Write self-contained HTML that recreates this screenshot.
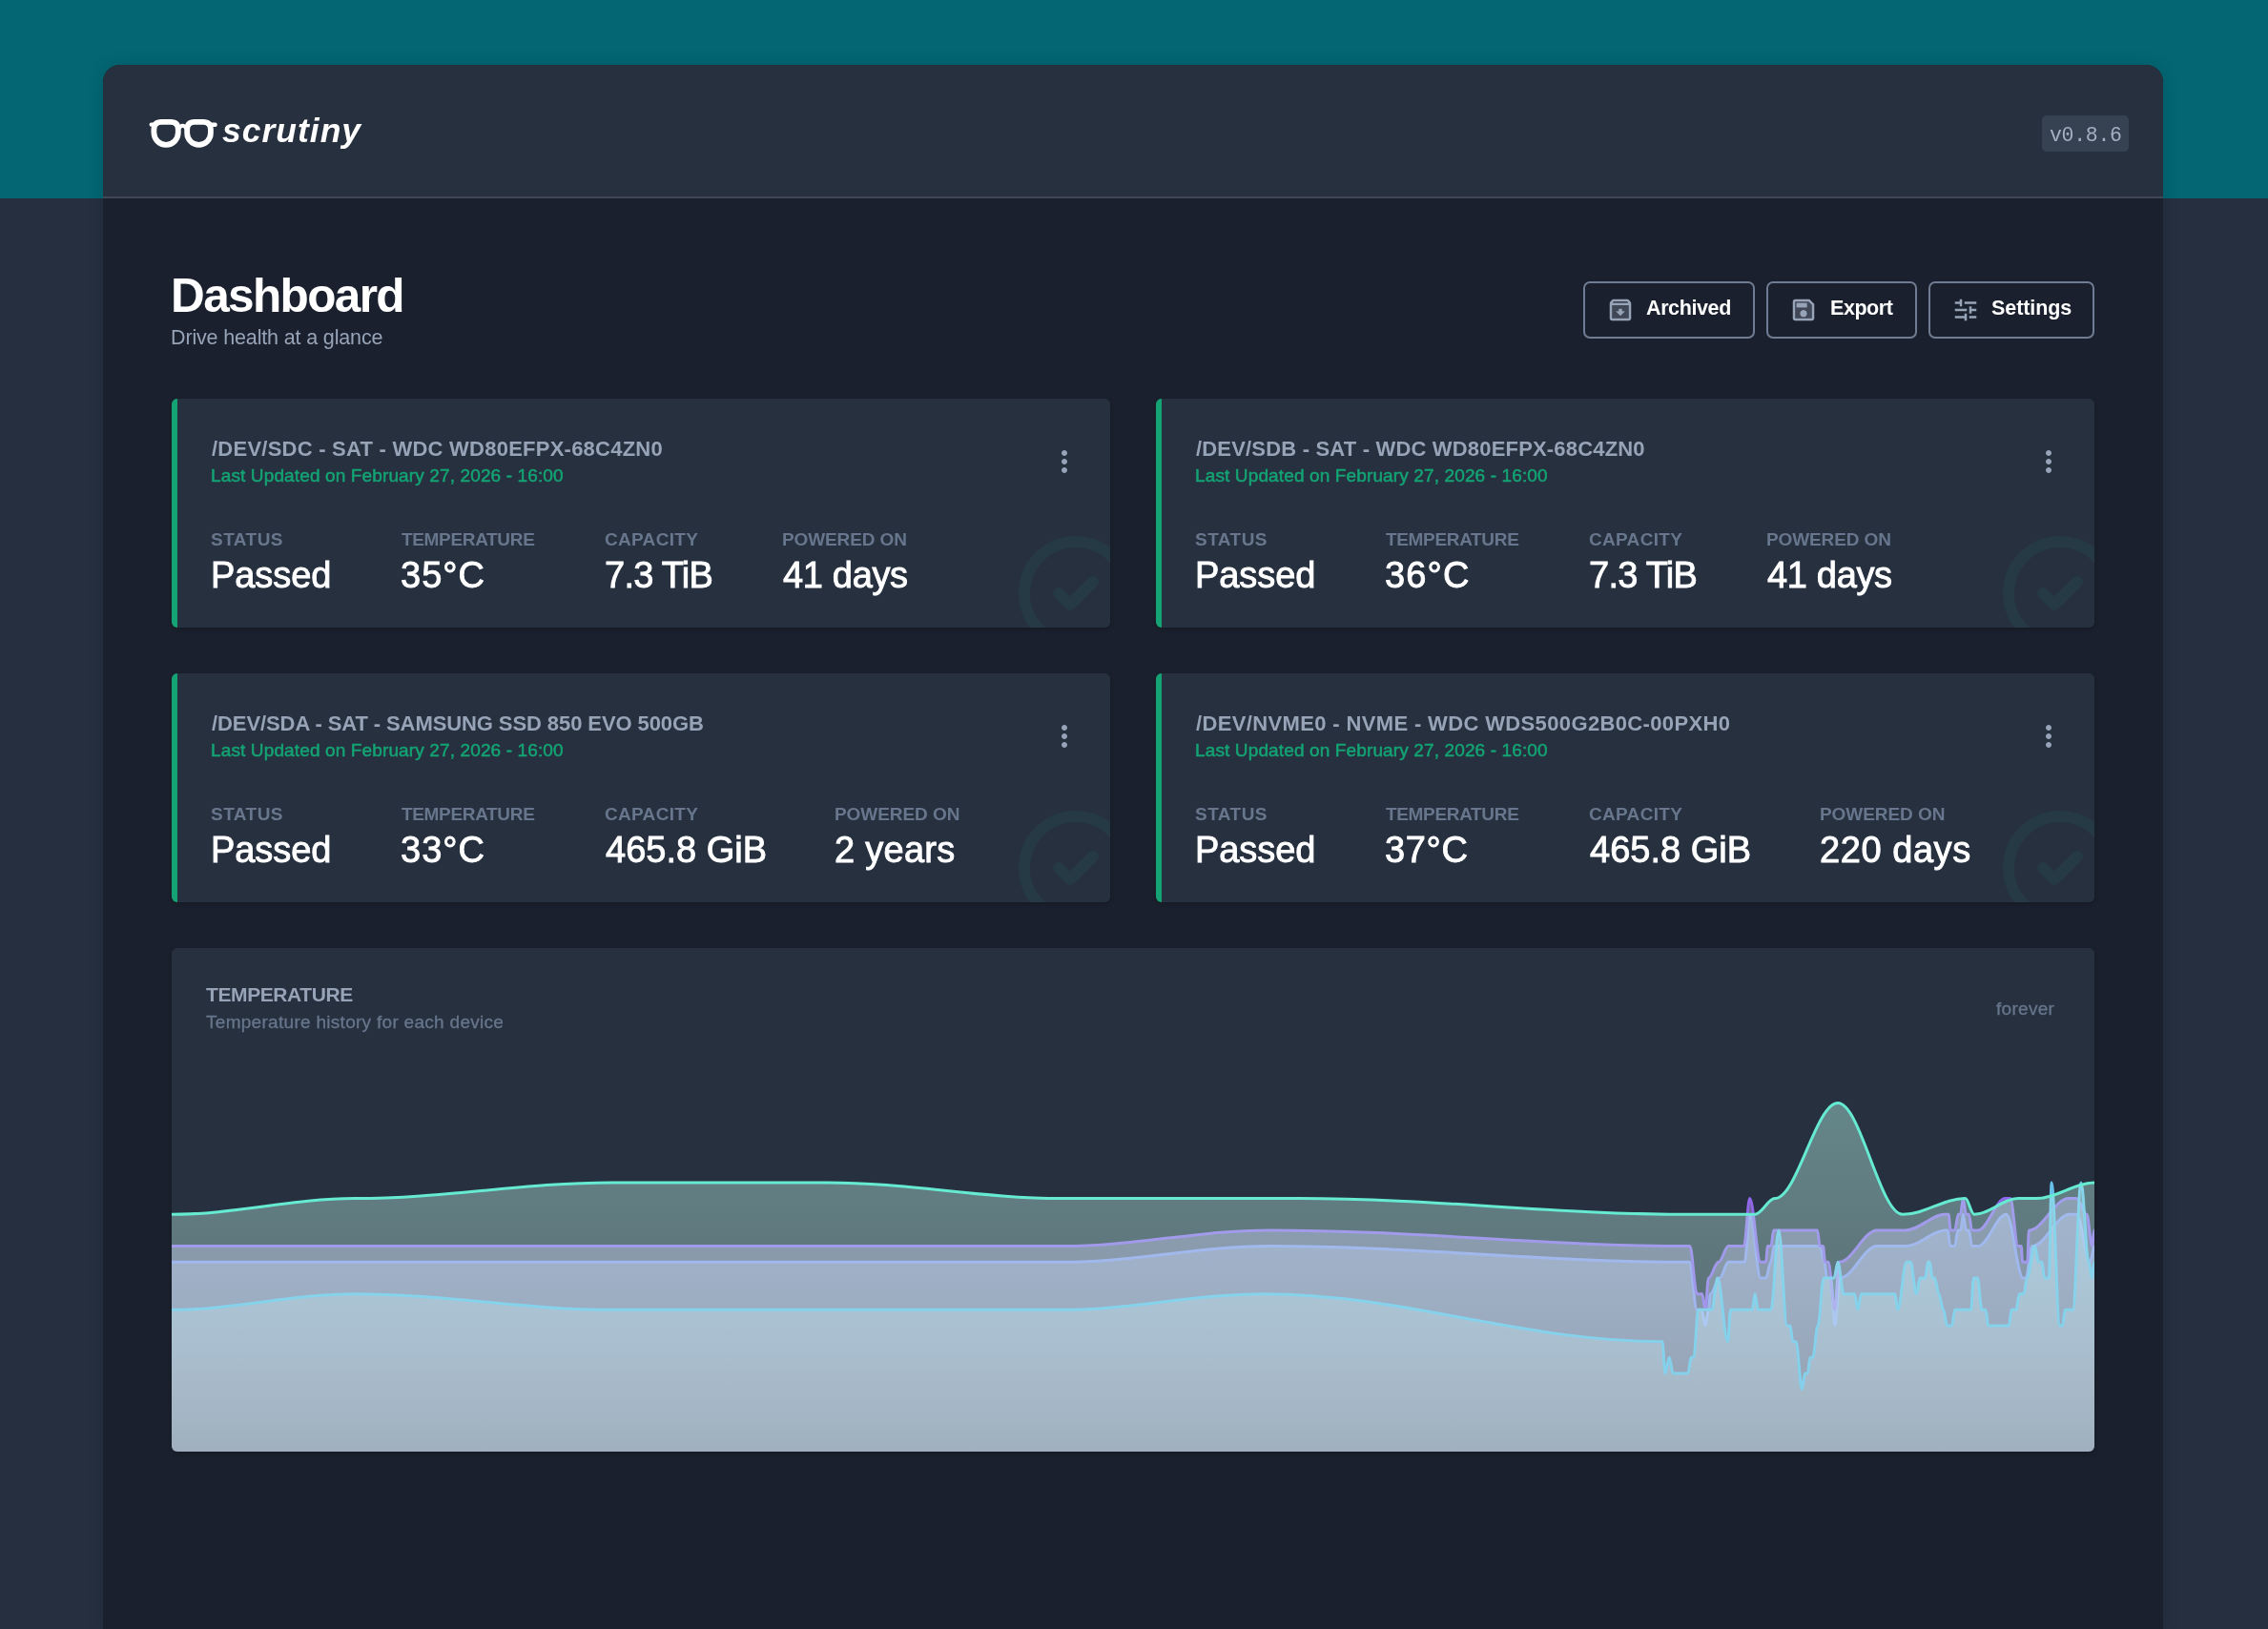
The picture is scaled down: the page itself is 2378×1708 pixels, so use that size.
<!DOCTYPE html>
<html><head><meta charset="utf-8"><title>scrutiny</title>
<style>
html,body{margin:0;padding:0}
body{width:2378px;height:1708px;overflow:hidden;background:#252f3f;position:relative;font-family:"Liberation Sans",sans-serif}
.band{position:absolute;left:0;top:0;width:2378px;height:208px;background:#036672}
.wrap{position:absolute;left:108px;top:68px;width:2160px;height:1640px;background:#1b202e;border-radius:18px 18px 0 0;box-shadow:0 0 18px rgba(0,0,0,.12);overflow:hidden}
.hdr{position:absolute;left:0;top:0;width:2160px;height:138px;background:#27303f;border-bottom:2px solid #414757}
.t{position:absolute;white-space:nowrap;line-height:1;will-change:transform}
.card{position:absolute;width:984px;height:240px;background:#27303f;border-radius:6px;overflow:hidden;box-shadow:0 2px 5px rgba(0,0,0,.18)}
.card:before{content:"";position:absolute;left:0;top:0;width:6px;height:100%;background:#14a474}
.btn{position:absolute;top:295px;height:56px;border:2px solid #707c92;border-radius:7px}
.badge{position:absolute;left:2141px;top:121px;width:91px;height:38px;border-radius:5px;background:#364152}
.chartcard{position:absolute;left:180px;top:994px;width:2016px;height:528px;background:#27303f;border-radius:6px;overflow:hidden;box-shadow:0 2px 5px rgba(0,0,0,.18)}
svg{position:absolute;overflow:visible}
</style></head><body>
<div class="band"></div>
<div class="wrap"><div class="hdr"></div></div>
<div class="badge"></div>

<svg style="left:150px;top:115px" width="90" height="50" viewBox="0 0 90 50">
<g fill="none" stroke="#fff" stroke-linecap="round" stroke-linejoin="round">
<path stroke-width="5.800" d="M11.400 20.800Q11.400 12.800 19.400 12.800H28.800Q36.800 12.800 36.800 20.800V24.100A12.700 12.700 0 0 1 11.400 24.100Z"/>
<path stroke-width="5.800" d="M46.200 20.800Q46.200 12.800 54.200 12.800H62.900Q70.900 12.800 70.900 20.800V24.450A12.350 12.350 0 0 1 46.200 24.450Z"/>
<path stroke-width="4.200" d="M37.500 19.500Q41.500 14 45.500 19.500"/>
<path stroke-width="4.400" d="M8.700 15.600H13M70 15.800H75.600"/>
</g></svg>

<div class="btn" style="left:1660px;width:176px"></div>
<div class="btn" style="left:1852px;width:154px"></div>
<div class="btn" style="left:2022px;width:170px"></div>
<svg style="left:1684px;top:310px" width="30" height="30" viewBox="0 0 24 24">
<path d="M5 19h14V8H5v11zm5.55-6v-2h2.91v2H16l-4 4-4-4h2.55z" fill="#97a3b7" opacity=".3"/>
<path d="M16 13h-2.55v-2h-2.9v2H8l4 4zm4.54-7.77l-1.39-1.68C18.88 3.21 18.47 3 18 3H6c-.47 0-.88.21-1.16.55L3.46 5.23C3.17 5.57 3 6.02 3 6.5V19c0 1.1.9 2 2 2h14c1.1 0 2-.9 2-2V6.500c0-.48-.17-.93-.46-1.27zM6.240 5h11.520l.81.970H5.440l.8-.97zM19 19H5V8h14v11z" fill="#97a3b7"/>
</svg>
<svg style="left:1876px;top:310px" width="30" height="30" viewBox="0 0 24 24">
<path d="M5 5v14h14V7.830L16.170 5H5zm7 13c-1.660 0-3-1.340-3-3s1.340-3 3-3 3 1.340 3 3-1.340 3-3 3zm3-8H6V6h9v4z" fill="#97a3b7" opacity=".3"/>
<path d="M17 3H5c-1.110 0-2 .9-2 2v14c0 1.100.890 2 2 2h14c1.100 0 2-.9 2-2V7l-4-4zm2 16H5V5h11.170L19 7.830V19zm-7-7c-1.660 0-3 1.340-3 3s1.340 3 3 3 3-1.340 3-3-1.340-3-3-3zM6 6h9v4H6z" fill="#97a3b7"/>
</svg>
<svg style="left:2046px;top:310px" width="30" height="30" viewBox="0 0 24 24">
<path transform="translate(24 0) scale(-1 1)" d="M3 17v2h6v-2H3zM3 5v2h10V5H3zm10 16v-2h8v-2h-8v-2h-2v6h2zM7 9v2H3v2h4v2h2V9H7zm14 4v-2H11v2h10zm-6-4h2V7h4V5h-4V3h-2v6z" fill="#97a3b7"/>
</svg>

<div class="card" style="left:180px;top:418px">
<svg style="left:876px;top:131.500px" width="144" height="144" viewBox="0 0 24 24"><path d="M9 12l2 2 4-4m6 2a9 9 0 11-18 0 9 9 0 0118 0z" fill="none" stroke="#14a474" stroke-opacity=".095" stroke-width="2" stroke-linecap="round" stroke-linejoin="round"/></svg>
<svg style="left:917.800px;top:48px" width="36" height="36" viewBox="0 0 24 24"><path d="M12 8c1.100 0 2-.9 2-2s-.9-2-2-2-2 .9-2 2 .9 2 2 2zm0 2c-1.100 0-2 .9-2 2s.9 2 2 2 2-.9 2-2-.9-2-2-2zm0 6c-1.100 0-2 .9-2 2s.9 2 2 2 2-.9 2-2-.9-2-2-2z" fill="#97a3b7"/></svg>
</div>
<div class="card" style="left:1212px;top:418px">
<svg style="left:876px;top:131.500px" width="144" height="144" viewBox="0 0 24 24"><path d="M9 12l2 2 4-4m6 2a9 9 0 11-18 0 9 9 0 0118 0z" fill="none" stroke="#14a474" stroke-opacity=".095" stroke-width="2" stroke-linecap="round" stroke-linejoin="round"/></svg>
<svg style="left:917.800px;top:48px" width="36" height="36" viewBox="0 0 24 24"><path d="M12 8c1.100 0 2-.9 2-2s-.9-2-2-2-2 .9-2 2 .9 2 2 2zm0 2c-1.100 0-2 .9-2 2s.9 2 2 2 2-.9 2-2-.9-2-2-2zm0 6c-1.100 0-2 .9-2 2s.9 2 2 2 2-.9 2-2-.9-2-2-2z" fill="#97a3b7"/></svg>
</div>
<div class="card" style="left:180px;top:706px">
<svg style="left:876px;top:131.500px" width="144" height="144" viewBox="0 0 24 24"><path d="M9 12l2 2 4-4m6 2a9 9 0 11-18 0 9 9 0 0118 0z" fill="none" stroke="#14a474" stroke-opacity=".095" stroke-width="2" stroke-linecap="round" stroke-linejoin="round"/></svg>
<svg style="left:917.800px;top:48px" width="36" height="36" viewBox="0 0 24 24"><path d="M12 8c1.100 0 2-.9 2-2s-.9-2-2-2-2 .9-2 2 .9 2 2 2zm0 2c-1.100 0-2 .9-2 2s.9 2 2 2 2-.9 2-2-.9-2-2-2zm0 6c-1.100 0-2 .9-2 2s.9 2 2 2 2-.9 2-2-.9-2-2-2z" fill="#97a3b7"/></svg>
</div>
<div class="card" style="left:1212px;top:706px">
<svg style="left:876px;top:131.500px" width="144" height="144" viewBox="0 0 24 24"><path d="M9 12l2 2 4-4m6 2a9 9 0 11-18 0 9 9 0 0118 0z" fill="none" stroke="#14a474" stroke-opacity=".095" stroke-width="2" stroke-linecap="round" stroke-linejoin="round"/></svg>
<svg style="left:917.800px;top:48px" width="36" height="36" viewBox="0 0 24 24"><path d="M12 8c1.100 0 2-.9 2-2s-.9-2-2-2-2 .9-2 2 .9 2 2 2zm0 2c-1.100 0-2 .9-2 2s.9 2 2 2 2-.9 2-2-.9-2-2-2zm0 6c-1.100 0-2 .9-2 2s.9 2 2 2 2-.9 2-2-.9-2-2-2z" fill="#97a3b7"/></svg>
</div>
<div class="chartcard"><svg style="left:0;top:0" width="2016" height="528" viewBox="180 994 2016 528"><defs>
<linearGradient id="gb" x1="0" y1="0" x2="0" y2="1"><stop offset="0" stop-color="#b2bef4" stop-opacity="0.44"/><stop offset="1" stop-color="#d5dbf9" stop-opacity="0.25"/></linearGradient>
<linearGradient id="gp" x1="0" y1="0" x2="0" y2="1"><stop offset="0" stop-color="#c7b2f4" stop-opacity="0.44"/><stop offset="1" stop-color="#e0d5f9" stop-opacity="0.25"/></linearGradient>
<linearGradient id="gc" x1="0" y1="0" x2="0" y2="1"><stop offset="0" stop-color="#b2dff4" stop-opacity="0.44"/><stop offset="1" stop-color="#d5edf9" stop-opacity="0.25"/></linearGradient>
<linearGradient id="gg" x1="0" y1="0" x2="0" y2="1"><stop offset="0" stop-color="#b2f4e8" stop-opacity="0.44"/><stop offset="1" stop-color="#d5f9f2" stop-opacity="0.25"/></linearGradient>
</defs>
<path d="M180.0 1323.3L1114.0 1323.3C1190.0 1323.3 1255.0 1306.6 1331.0 1306.6C1485.1 1306.6 1617.1 1323.3 1771.2 1323.3C1774.0 1323.3 1776.5 1373.3 1779.3 1373.3L1784.0 1373.3C1785.4 1373.3 1786.6 1390.0 1788.0 1390.0C1789.2 1390.0 1790.2 1373.3 1791.4 1373.3C1792.1 1373.3 1792.7 1356.7 1793.4 1356.7C1796.8 1356.7 1799.6 1340.0 1803.0 1340.0C1806.3 1340.0 1809.0 1323.3 1812.3 1323.3L1829.2 1323.3C1831.2 1323.3 1833.0 1273.3 1835.0 1273.3C1838.8 1273.3 1842.2 1340.0 1846.0 1340.0L1851.5 1340.0C1853.3 1340.0 1854.9 1323.3 1856.7 1323.3C1857.9 1323.3 1859.0 1306.6 1860.2 1306.6L1908.2 1306.6C1909.8 1306.6 1911.3 1323.3 1912.9 1323.3C1913.8 1323.3 1914.7 1340.0 1915.6 1340.0L1919.6 1340.0C1921.1 1340.0 1922.5 1390.0 1924.0 1390.0C1925.8 1390.0 1927.2 1340.0 1929.0 1340.0C1942.7 1340.0 1954.3 1306.6 1968.0 1306.6L1999.0 1306.6C2013.2 1306.6 2025.4 1290.0 2039.6 1290.0L2042.2 1290.0C2043.1 1290.0 2043.9 1306.6 2044.8 1306.6L2049.6 1306.6C2050.8 1306.6 2051.7 1290.0 2052.9 1290.0L2055.8 1290.0C2056.7 1290.0 2057.5 1273.3 2058.4 1273.3C2059.5 1273.3 2060.3 1290.0 2061.4 1290.0L2064.3 1290.0C2065.5 1290.0 2066.4 1306.6 2067.6 1306.6L2074.0 1306.6C2084.4 1306.6 2093.3 1273.3 2103.7 1273.3C2109.9 1273.3 2115.1 1340.0 2121.3 1340.0L2124.0 1340.0C2126.3 1340.0 2128.4 1306.6 2130.7 1306.6C2144.4 1306.6 2156.2 1273.3 2169.9 1273.3L2177.3 1273.3C2182.3 1273.3 2186.5 1323.3 2191.5 1323.3C2193.1 1323.3 2194.4 1306.6 2196.0 1306.6L2196 1522L180 1522Z" fill="url(#gb)"/>
<path d="M180.0 1323.3L1114.0 1323.3C1190.0 1323.3 1255.0 1306.6 1331.0 1306.6C1485.1 1306.6 1617.1 1323.3 1771.2 1323.3C1774.0 1323.3 1776.5 1373.3 1779.3 1373.3L1784.0 1373.3C1785.4 1373.3 1786.6 1390.0 1788.0 1390.0C1789.2 1390.0 1790.2 1373.3 1791.4 1373.3C1792.1 1373.3 1792.7 1356.7 1793.4 1356.7C1796.8 1356.7 1799.6 1340.0 1803.0 1340.0C1806.3 1340.0 1809.0 1323.3 1812.3 1323.3L1829.2 1323.3C1831.2 1323.3 1833.0 1273.3 1835.0 1273.3C1838.8 1273.3 1842.2 1340.0 1846.0 1340.0L1851.5 1340.0C1853.3 1340.0 1854.9 1323.3 1856.7 1323.3C1857.9 1323.3 1859.0 1306.6 1860.2 1306.6L1908.2 1306.6C1909.8 1306.6 1911.3 1323.3 1912.9 1323.3C1913.8 1323.3 1914.7 1340.0 1915.6 1340.0L1919.6 1340.0C1921.1 1340.0 1922.5 1390.0 1924.0 1390.0C1925.8 1390.0 1927.2 1340.0 1929.0 1340.0C1942.7 1340.0 1954.3 1306.6 1968.0 1306.6L1999.0 1306.6C2013.2 1306.6 2025.4 1290.0 2039.6 1290.0L2042.2 1290.0C2043.1 1290.0 2043.9 1306.6 2044.8 1306.6L2049.6 1306.6C2050.8 1306.6 2051.7 1290.0 2052.9 1290.0L2055.8 1290.0C2056.7 1290.0 2057.5 1273.3 2058.4 1273.3C2059.5 1273.3 2060.3 1290.0 2061.4 1290.0L2064.3 1290.0C2065.5 1290.0 2066.4 1306.6 2067.6 1306.6L2074.0 1306.6C2084.4 1306.6 2093.3 1273.3 2103.7 1273.3C2109.9 1273.3 2115.1 1340.0 2121.3 1340.0L2124.0 1340.0C2126.3 1340.0 2128.4 1306.6 2130.7 1306.6C2144.4 1306.6 2156.2 1273.3 2169.9 1273.3L2177.3 1273.3C2182.3 1273.3 2186.5 1323.3 2191.5 1323.3C2193.1 1323.3 2194.4 1306.6 2196.0 1306.6" fill="none" stroke="#667eea" stroke-width="3" stroke-linecap="butt"/>
<path d="M180.0 1306.6L1114.0 1306.6C1190.0 1306.6 1255.0 1290.0 1331.0 1290.0C1485.3 1290.0 1617.5 1306.6 1771.8 1306.6C1774.4 1306.6 1776.7 1356.7 1779.3 1356.7L1784.7 1356.7C1785.9 1356.7 1786.8 1373.3 1788.0 1373.3C1789.2 1373.3 1790.2 1340.0 1791.4 1340.0C1795.1 1340.0 1798.2 1323.3 1801.9 1323.3C1805.5 1323.3 1808.7 1306.6 1812.3 1306.6L1828.5 1306.6C1830.6 1306.6 1832.5 1256.6 1834.6 1256.6C1838.6 1256.6 1842.0 1323.3 1846.0 1323.3L1851.5 1323.3C1852.2 1323.3 1852.8 1306.6 1853.5 1306.6L1856.9 1306.6C1857.8 1306.6 1858.7 1290.0 1859.6 1290.0L1905.5 1290.0C1906.4 1290.0 1907.3 1306.6 1908.2 1306.6L1911.5 1306.6C1912.2 1306.6 1912.9 1323.3 1913.6 1323.3L1917.0 1323.3C1919.3 1323.3 1921.4 1373.3 1923.7 1373.3C1925.3 1373.3 1926.8 1323.3 1928.4 1323.3C1942.3 1323.3 1954.1 1290.0 1968.0 1290.0L1998.0 1290.0C2012.6 1290.0 2025.0 1273.3 2039.6 1273.3L2043.0 1273.3C2043.8 1273.3 2044.4 1290.0 2045.2 1290.0L2049.6 1290.0C2050.9 1290.0 2052.0 1273.3 2053.3 1273.3L2055.5 1273.3C2056.5 1273.3 2057.4 1256.6 2058.4 1256.6C2059.5 1256.6 2060.3 1273.3 2061.4 1273.3L2064.3 1273.3C2065.5 1273.3 2066.4 1290.0 2067.6 1290.0L2074.0 1290.0C2084.0 1290.0 2092.6 1256.6 2102.6 1256.6L2107.8 1256.6C2110.6 1256.6 2113.1 1306.6 2115.9 1306.6L2119.2 1306.6C2119.7 1306.6 2120.1 1323.3 2120.6 1323.3L2125.8 1323.3C2126.3 1323.3 2126.8 1290.0 2127.3 1290.0C2141.9 1290.0 2154.3 1256.6 2168.9 1256.6L2177.0 1256.6C2180.8 1256.6 2184.2 1273.3 2188.0 1273.3C2189.9 1273.3 2191.6 1306.6 2193.5 1306.6C2194.4 1306.6 2195.1 1290.0 2196.0 1290.0L2196 1522L180 1522Z" fill="url(#gp)"/>
<path d="M180.0 1306.6L1114.0 1306.6C1190.0 1306.6 1255.0 1290.0 1331.0 1290.0C1485.3 1290.0 1617.5 1306.6 1771.8 1306.6C1774.4 1306.6 1776.7 1356.7 1779.3 1356.7L1784.7 1356.7C1785.9 1356.7 1786.8 1373.3 1788.0 1373.3C1789.2 1373.3 1790.2 1340.0 1791.4 1340.0C1795.1 1340.0 1798.2 1323.3 1801.9 1323.3C1805.5 1323.3 1808.7 1306.6 1812.3 1306.6L1828.5 1306.6C1830.6 1306.6 1832.5 1256.6 1834.6 1256.6C1838.6 1256.6 1842.0 1323.3 1846.0 1323.3L1851.5 1323.3C1852.2 1323.3 1852.8 1306.6 1853.5 1306.6L1856.9 1306.6C1857.8 1306.6 1858.7 1290.0 1859.6 1290.0L1905.5 1290.0C1906.4 1290.0 1907.3 1306.6 1908.2 1306.6L1911.5 1306.6C1912.2 1306.6 1912.9 1323.3 1913.6 1323.3L1917.0 1323.3C1919.3 1323.3 1921.4 1373.3 1923.7 1373.3C1925.3 1373.3 1926.8 1323.3 1928.4 1323.3C1942.3 1323.3 1954.1 1290.0 1968.0 1290.0L1998.0 1290.0C2012.6 1290.0 2025.0 1273.3 2039.6 1273.3L2043.0 1273.3C2043.8 1273.3 2044.4 1290.0 2045.2 1290.0L2049.6 1290.0C2050.9 1290.0 2052.0 1273.3 2053.3 1273.3L2055.5 1273.3C2056.5 1273.3 2057.4 1256.6 2058.4 1256.6C2059.5 1256.6 2060.3 1273.3 2061.4 1273.3L2064.3 1273.3C2065.5 1273.3 2066.4 1290.0 2067.6 1290.0L2074.0 1290.0C2084.0 1290.0 2092.6 1256.6 2102.6 1256.6L2107.8 1256.6C2110.6 1256.6 2113.1 1306.6 2115.9 1306.6L2119.2 1306.6C2119.7 1306.6 2120.1 1323.3 2120.6 1323.3L2125.8 1323.3C2126.3 1323.3 2126.8 1290.0 2127.3 1290.0C2141.9 1290.0 2154.3 1256.6 2168.9 1256.6L2177.0 1256.6C2180.8 1256.6 2184.2 1273.3 2188.0 1273.3C2189.9 1273.3 2191.6 1306.6 2193.5 1306.6C2194.4 1306.6 2195.1 1290.0 2196.0 1290.0" fill="none" stroke="#9066ea" stroke-width="3" stroke-linecap="butt"/>
<path d="M180.0 1373.3C247.2 1373.3 304.8 1356.7 372.0 1356.7C466.5 1356.7 547.5 1373.3 642.0 1373.3L1114.0 1373.3C1187.8 1373.3 1251.2 1356.7 1325.0 1356.7C1471.3 1356.7 1596.7 1406.7 1743.0 1406.7C1744.0 1406.7 1745.0 1440.0 1746.0 1440.0C1747.5 1440.0 1748.7 1423.3 1750.2 1423.3C1751.6 1423.3 1752.9 1440.0 1754.3 1440.0L1769.8 1440.0C1771.0 1440.0 1772.0 1423.3 1773.2 1423.3L1775.9 1423.3C1777.5 1423.3 1779.0 1373.3 1780.6 1373.3L1794.8 1373.3C1796.9 1373.3 1798.8 1340.0 1800.9 1340.0C1804.7 1340.0 1807.9 1406.7 1811.7 1406.7C1812.6 1406.7 1813.5 1373.3 1814.4 1373.3L1837.3 1373.3C1838.2 1373.3 1839.1 1356.7 1840.0 1356.7C1841.2 1356.7 1842.2 1373.3 1843.4 1373.3L1856.9 1373.3C1859.7 1373.3 1862.2 1290.0 1865.0 1290.0C1868.0 1290.0 1870.7 1390.0 1873.7 1390.0L1877.0 1390.0C1878.0 1390.0 1878.8 1406.7 1879.8 1406.7L1883.2 1406.7C1885.3 1406.7 1887.2 1456.7 1889.3 1456.7C1890.5 1456.7 1891.4 1440.0 1892.6 1440.0L1895.3 1440.0C1896.2 1440.0 1897.1 1423.3 1898.0 1423.3L1900.7 1423.3C1902.6 1423.3 1904.1 1390.0 1906.0 1390.0C1908.2 1390.0 1910.0 1340.0 1912.2 1340.0L1923.0 1340.0C1924.4 1340.0 1925.6 1323.3 1927.0 1323.3C1929.1 1323.3 1931.0 1356.7 1933.1 1356.7L1944.6 1356.7C1945.8 1356.7 1946.8 1373.3 1948.0 1373.3C1949.2 1373.3 1950.2 1356.7 1951.4 1356.7L1987.0 1356.7C1987.9 1356.7 1988.8 1373.3 1989.7 1373.3C1993.0 1373.3 1995.7 1323.3 1999.0 1323.3L2003.2 1323.3C2005.3 1323.3 2007.2 1356.7 2009.3 1356.7C2010.7 1356.7 2011.9 1340.0 2013.3 1340.0L2018.7 1340.0C2019.6 1340.0 2020.5 1323.3 2021.4 1323.3L2023.4 1323.3C2024.3 1323.3 2025.2 1340.0 2026.1 1340.0L2028.5 1340.0C2030.0 1340.0 2031.4 1356.7 2032.9 1356.7C2034.5 1356.7 2036.0 1373.3 2037.6 1373.3C2039.0 1373.3 2040.3 1390.0 2041.7 1390.0L2046.4 1390.0C2047.6 1390.0 2048.6 1373.3 2049.8 1373.3L2066.6 1373.3C2067.5 1373.3 2068.4 1340.0 2069.3 1340.0L2073.4 1340.0C2075.0 1340.0 2076.4 1373.3 2078.0 1373.3L2082.0 1373.3C2083.0 1373.3 2083.8 1390.0 2084.8 1390.0L2106.4 1390.0C2107.3 1390.0 2108.1 1373.3 2109.0 1373.3L2114.0 1373.3C2115.1 1373.3 2116.1 1356.7 2117.2 1356.7L2122.0 1356.7C2123.2 1356.7 2124.1 1340.0 2125.3 1340.0C2128.1 1340.0 2130.6 1306.6 2133.4 1306.6C2134.8 1306.6 2136.1 1323.3 2137.5 1323.3L2141.0 1323.3C2141.9 1323.3 2142.7 1340.0 2143.6 1340.0L2148.3 1340.0C2149.2 1340.0 2150.1 1240.0 2151.0 1240.0C2154.1 1240.0 2156.7 1390.0 2159.8 1390.0L2162.5 1390.0C2163.4 1390.0 2164.3 1373.3 2165.2 1373.3L2173.3 1373.3C2176.3 1373.3 2179.0 1240.0 2182.0 1240.0C2184.8 1240.0 2187.2 1323.3 2190.0 1323.3C2191.2 1323.3 2192.3 1340.0 2193.5 1340.0C2194.4 1340.0 2195.1 1323.3 2196.0 1323.3L2196 1522L180 1522Z" fill="url(#gc)"/>
<path d="M180.0 1373.3C247.2 1373.3 304.8 1356.7 372.0 1356.7C466.5 1356.7 547.5 1373.3 642.0 1373.3L1114.0 1373.3C1187.8 1373.3 1251.2 1356.7 1325.0 1356.7C1471.3 1356.7 1596.7 1406.7 1743.0 1406.7C1744.0 1406.7 1745.0 1440.0 1746.0 1440.0C1747.5 1440.0 1748.7 1423.3 1750.2 1423.3C1751.6 1423.3 1752.9 1440.0 1754.3 1440.0L1769.8 1440.0C1771.0 1440.0 1772.0 1423.3 1773.2 1423.3L1775.9 1423.3C1777.5 1423.3 1779.0 1373.3 1780.6 1373.3L1794.8 1373.3C1796.9 1373.3 1798.8 1340.0 1800.9 1340.0C1804.7 1340.0 1807.9 1406.7 1811.7 1406.7C1812.6 1406.7 1813.5 1373.3 1814.4 1373.3L1837.3 1373.3C1838.2 1373.3 1839.1 1356.7 1840.0 1356.7C1841.2 1356.7 1842.2 1373.3 1843.4 1373.3L1856.9 1373.3C1859.7 1373.3 1862.2 1290.0 1865.0 1290.0C1868.0 1290.0 1870.7 1390.0 1873.7 1390.0L1877.0 1390.0C1878.0 1390.0 1878.8 1406.7 1879.8 1406.7L1883.2 1406.7C1885.3 1406.7 1887.2 1456.7 1889.3 1456.7C1890.5 1456.7 1891.4 1440.0 1892.6 1440.0L1895.3 1440.0C1896.2 1440.0 1897.1 1423.3 1898.0 1423.3L1900.7 1423.3C1902.6 1423.3 1904.1 1390.0 1906.0 1390.0C1908.2 1390.0 1910.0 1340.0 1912.2 1340.0L1923.0 1340.0C1924.4 1340.0 1925.6 1323.3 1927.0 1323.3C1929.1 1323.3 1931.0 1356.7 1933.1 1356.7L1944.6 1356.7C1945.8 1356.7 1946.8 1373.3 1948.0 1373.3C1949.2 1373.3 1950.2 1356.7 1951.4 1356.7L1987.0 1356.7C1987.9 1356.7 1988.8 1373.3 1989.7 1373.3C1993.0 1373.3 1995.7 1323.3 1999.0 1323.3L2003.2 1323.3C2005.3 1323.3 2007.2 1356.7 2009.3 1356.7C2010.7 1356.7 2011.9 1340.0 2013.3 1340.0L2018.7 1340.0C2019.6 1340.0 2020.5 1323.3 2021.4 1323.3L2023.4 1323.3C2024.3 1323.3 2025.2 1340.0 2026.1 1340.0L2028.5 1340.0C2030.0 1340.0 2031.4 1356.7 2032.9 1356.7C2034.5 1356.7 2036.0 1373.3 2037.6 1373.3C2039.0 1373.3 2040.3 1390.0 2041.7 1390.0L2046.4 1390.0C2047.6 1390.0 2048.6 1373.3 2049.8 1373.3L2066.6 1373.3C2067.5 1373.3 2068.4 1340.0 2069.3 1340.0L2073.4 1340.0C2075.0 1340.0 2076.4 1373.3 2078.0 1373.3L2082.0 1373.3C2083.0 1373.3 2083.8 1390.0 2084.8 1390.0L2106.4 1390.0C2107.3 1390.0 2108.1 1373.3 2109.0 1373.3L2114.0 1373.3C2115.1 1373.3 2116.1 1356.7 2117.2 1356.7L2122.0 1356.7C2123.2 1356.7 2124.1 1340.0 2125.3 1340.0C2128.1 1340.0 2130.6 1306.6 2133.4 1306.6C2134.8 1306.6 2136.1 1323.3 2137.5 1323.3L2141.0 1323.3C2141.9 1323.3 2142.7 1340.0 2143.6 1340.0L2148.3 1340.0C2149.2 1340.0 2150.1 1240.0 2151.0 1240.0C2154.1 1240.0 2156.7 1390.0 2159.8 1390.0L2162.5 1390.0C2163.4 1390.0 2164.3 1373.3 2165.2 1373.3L2173.3 1373.3C2176.3 1373.3 2179.0 1240.0 2182.0 1240.0C2184.8 1240.0 2187.2 1323.3 2190.0 1323.3C2191.2 1323.3 2192.3 1340.0 2193.5 1340.0C2194.4 1340.0 2195.1 1323.3 2196.0 1323.3" fill="none" stroke="#66c0ea" stroke-width="3" stroke-linecap="butt"/>
<path d="M180.0 1273.3C247.2 1273.3 304.8 1256.6 372.0 1256.6C466.5 1256.6 547.5 1240.0 642.0 1240.0L867.0 1240.0C953.5 1240.0 1027.5 1256.6 1114.0 1256.6L1362.0 1256.6C1505.2 1256.6 1627.8 1273.3 1771.0 1273.3L1840.0 1273.3C1847.3 1273.3 1853.7 1256.6 1861.0 1256.6C1884.1 1256.6 1903.9 1156.6 1927.0 1156.6C1950.8 1156.6 1971.2 1273.3 1995.0 1273.3C2018.0 1273.3 2037.6 1256.6 2060.6 1256.6C2063.9 1256.6 2066.7 1273.3 2070.0 1273.3C2086.1 1273.3 2099.9 1256.6 2116.0 1256.6L2135.0 1256.6C2156.3 1256.6 2174.7 1240.0 2196.0 1240.0L2196 1522L180 1522Z" fill="url(#gg)"/>
<path d="M180.0 1273.3C247.2 1273.3 304.8 1256.6 372.0 1256.6C466.5 1256.6 547.5 1240.0 642.0 1240.0L867.0 1240.0C953.5 1240.0 1027.5 1256.6 1114.0 1256.6L1362.0 1256.6C1505.2 1256.6 1627.8 1273.3 1771.0 1273.3L1840.0 1273.3C1847.3 1273.3 1853.7 1256.6 1861.0 1256.6C1884.1 1256.6 1903.9 1156.6 1927.0 1156.6C1950.8 1156.6 1971.2 1273.3 1995.0 1273.3C2018.0 1273.3 2037.6 1256.6 2060.6 1256.6C2063.9 1256.6 2066.7 1273.3 2070.0 1273.3C2086.1 1273.3 2099.9 1256.6 2116.0 1256.6L2135.0 1256.6C2156.3 1256.6 2174.7 1240.0 2196.0 1240.0" fill="none" stroke="#66ead2" stroke-width="3" stroke-linecap="butt"/>
</svg></div>
<div class="t" style="left:233.2px;top:119.7px;font-family:'Liberation Sans',sans-serif;font-size:35.5px;font-weight:700;color:#fff;letter-spacing:1.00px;font-style:italic;">scrutiny</div>
<div class="t" style="left:2149.0px;top:132.1px;font-family:'Liberation Mono',monospace;font-size:21.5px;font-weight:400;color:#a3afc2;letter-spacing:-0.30px;">v0.8.6</div>
<div class="t" style="left:179.2px;top:284.8px;font-family:'Liberation Sans',sans-serif;font-size:49.5px;font-weight:700;color:#fff;letter-spacing:-1.62px;">Dashboard</div>
<div class="t" style="left:179.2px;top:344.4px;font-family:'Liberation Sans',sans-serif;font-size:21.5px;font-weight:400;color:#97a3b7;letter-spacing:-0.15px;">Drive health at a glance</div>
<div class="t" style="left:1725.9px;top:313.4px;font-family:'Liberation Sans',sans-serif;font-size:21.5px;font-weight:700;color:#fff;letter-spacing:-0.39px;">Archived</div>
<div class="t" style="left:1918.5px;top:313.4px;font-family:'Liberation Sans',sans-serif;font-size:21.5px;font-weight:700;color:#fff;letter-spacing:-0.44px;">Export</div>
<div class="t" style="left:2087.7px;top:313.4px;font-family:'Liberation Sans',sans-serif;font-size:21.5px;font-weight:700;color:#fff;letter-spacing:-0.08px;">Settings</div>
<div class="t" style="left:222.1px;top:459.5px;font-family:'Liberation Sans',sans-serif;font-size:22px;font-weight:700;color:#97a3b7;letter-spacing:0.24px;">/DEV/SDC - SAT - WDC WD80EFPX-68C4ZN0</div>
<div class="t" style="left:221.1px;top:488.9px;font-family:'Liberation Sans',sans-serif;font-size:19px;font-weight:400;color:#14a474;letter-spacing:0.13px;-webkit-text-stroke:0.5px #14a474;">Last Updated on February 27, 2026 - 16:00</div>
<div class="t" style="left:221.4px;top:555.8px;font-family:'Liberation Sans',sans-serif;font-size:19px;font-weight:700;color:#67768c;letter-spacing:0.46px;">STATUS</div>
<div class="t" style="left:220.8px;top:583.8px;font-family:'Liberation Sans',sans-serif;font-size:38px;font-weight:400;color:#fff;letter-spacing:-0.06px;-webkit-text-stroke:0.9px #fff;">Passed</div>
<div class="t" style="left:420.5px;top:555.8px;font-family:'Liberation Sans',sans-serif;font-size:19px;font-weight:700;color:#67768c;letter-spacing:-0.34px;">TEMPERATURE</div>
<div class="t" style="left:419.5px;top:583.8px;font-family:'Liberation Sans',sans-serif;font-size:38px;font-weight:400;color:#fff;letter-spacing:1.00px;-webkit-text-stroke:0.9px #fff;">35°C</div>
<div class="t" style="left:633.7px;top:555.8px;font-family:'Liberation Sans',sans-serif;font-size:19px;font-weight:700;color:#67768c;letter-spacing:0.30px;">CAPACITY</div>
<div class="t" style="left:633.7px;top:583.8px;font-family:'Liberation Sans',sans-serif;font-size:38px;font-weight:400;color:#fff;letter-spacing:-0.75px;-webkit-text-stroke:0.9px #fff;">7.3 TiB</div>
<div class="t" style="left:819.5px;top:555.8px;font-family:'Liberation Sans',sans-serif;font-size:19px;font-weight:700;color:#67768c;letter-spacing:-0.11px;">POWERED ON</div>
<div class="t" style="left:820.5px;top:583.8px;font-family:'Liberation Sans',sans-serif;font-size:38px;font-weight:400;color:#fff;letter-spacing:-0.33px;-webkit-text-stroke:0.9px #fff;">41 days</div>
<div class="t" style="left:1254.1px;top:459.5px;font-family:'Liberation Sans',sans-serif;font-size:22px;font-weight:700;color:#97a3b7;letter-spacing:0.18px;">/DEV/SDB - SAT - WDC WD80EFPX-68C4ZN0</div>
<div class="t" style="left:1253.1px;top:488.9px;font-family:'Liberation Sans',sans-serif;font-size:19px;font-weight:400;color:#14a474;letter-spacing:0.13px;-webkit-text-stroke:0.5px #14a474;">Last Updated on February 27, 2026 - 16:00</div>
<div class="t" style="left:1253.4px;top:555.8px;font-family:'Liberation Sans',sans-serif;font-size:19px;font-weight:700;color:#67768c;letter-spacing:0.46px;">STATUS</div>
<div class="t" style="left:1252.8px;top:583.8px;font-family:'Liberation Sans',sans-serif;font-size:38px;font-weight:400;color:#fff;letter-spacing:-0.06px;-webkit-text-stroke:0.9px #fff;">Passed</div>
<div class="t" style="left:1452.5px;top:555.8px;font-family:'Liberation Sans',sans-serif;font-size:19px;font-weight:700;color:#67768c;letter-spacing:-0.34px;">TEMPERATURE</div>
<div class="t" style="left:1451.5px;top:583.8px;font-family:'Liberation Sans',sans-serif;font-size:38px;font-weight:400;color:#fff;letter-spacing:1.17px;-webkit-text-stroke:0.9px #fff;">36°C</div>
<div class="t" style="left:1665.7px;top:555.8px;font-family:'Liberation Sans',sans-serif;font-size:19px;font-weight:700;color:#67768c;letter-spacing:0.30px;">CAPACITY</div>
<div class="t" style="left:1665.7px;top:583.8px;font-family:'Liberation Sans',sans-serif;font-size:38px;font-weight:400;color:#fff;letter-spacing:-0.75px;-webkit-text-stroke:0.9px #fff;">7.3 TiB</div>
<div class="t" style="left:1851.5px;top:555.8px;font-family:'Liberation Sans',sans-serif;font-size:19px;font-weight:700;color:#67768c;letter-spacing:-0.11px;">POWERED ON</div>
<div class="t" style="left:1852.5px;top:583.8px;font-family:'Liberation Sans',sans-serif;font-size:38px;font-weight:400;color:#fff;letter-spacing:-0.33px;-webkit-text-stroke:0.9px #fff;">41 days</div>
<div class="t" style="left:222.1px;top:747.5px;font-family:'Liberation Sans',sans-serif;font-size:22px;font-weight:700;color:#97a3b7;letter-spacing:-0.09px;">/DEV/SDA - SAT - SAMSUNG SSD 850 EVO 500GB</div>
<div class="t" style="left:221.1px;top:776.9px;font-family:'Liberation Sans',sans-serif;font-size:19px;font-weight:400;color:#14a474;letter-spacing:0.13px;-webkit-text-stroke:0.5px #14a474;">Last Updated on February 27, 2026 - 16:00</div>
<div class="t" style="left:221.4px;top:843.8px;font-family:'Liberation Sans',sans-serif;font-size:19px;font-weight:700;color:#67768c;letter-spacing:0.46px;">STATUS</div>
<div class="t" style="left:220.8px;top:871.8px;font-family:'Liberation Sans',sans-serif;font-size:38px;font-weight:400;color:#fff;letter-spacing:-0.06px;-webkit-text-stroke:0.9px #fff;">Passed</div>
<div class="t" style="left:420.5px;top:843.8px;font-family:'Liberation Sans',sans-serif;font-size:19px;font-weight:700;color:#67768c;letter-spacing:-0.34px;">TEMPERATURE</div>
<div class="t" style="left:419.5px;top:871.8px;font-family:'Liberation Sans',sans-serif;font-size:38px;font-weight:400;color:#fff;letter-spacing:1.00px;-webkit-text-stroke:0.9px #fff;">33°C</div>
<div class="t" style="left:633.6px;top:843.8px;font-family:'Liberation Sans',sans-serif;font-size:19px;font-weight:700;color:#67768c;letter-spacing:0.30px;">CAPACITY</div>
<div class="t" style="left:634.6px;top:871.8px;font-family:'Liberation Sans',sans-serif;font-size:38px;font-weight:400;color:#fff;letter-spacing:0.02px;-webkit-text-stroke:0.9px #fff;">465.8 GiB</div>
<div class="t" style="left:875.1px;top:843.8px;font-family:'Liberation Sans',sans-serif;font-size:19px;font-weight:700;color:#67768c;letter-spacing:-0.06px;">POWERED ON</div>
<div class="t" style="left:875.1px;top:871.8px;font-family:'Liberation Sans',sans-serif;font-size:38px;font-weight:400;color:#fff;letter-spacing:0.27px;-webkit-text-stroke:0.9px #fff;">2 years</div>
<div class="t" style="left:1254.1px;top:747.5px;font-family:'Liberation Sans',sans-serif;font-size:22px;font-weight:700;color:#97a3b7;letter-spacing:0.36px;">/DEV/NVME0 - NVME - WDC WDS500G2B0C-00PXH0</div>
<div class="t" style="left:1253.1px;top:776.9px;font-family:'Liberation Sans',sans-serif;font-size:19px;font-weight:400;color:#14a474;letter-spacing:0.13px;-webkit-text-stroke:0.5px #14a474;">Last Updated on February 27, 2026 - 16:00</div>
<div class="t" style="left:1253.4px;top:843.8px;font-family:'Liberation Sans',sans-serif;font-size:19px;font-weight:700;color:#67768c;letter-spacing:0.46px;">STATUS</div>
<div class="t" style="left:1252.8px;top:871.8px;font-family:'Liberation Sans',sans-serif;font-size:38px;font-weight:400;color:#fff;letter-spacing:-0.06px;-webkit-text-stroke:0.9px #fff;">Passed</div>
<div class="t" style="left:1452.5px;top:843.8px;font-family:'Liberation Sans',sans-serif;font-size:19px;font-weight:700;color:#67768c;letter-spacing:-0.34px;">TEMPERATURE</div>
<div class="t" style="left:1451.5px;top:871.8px;font-family:'Liberation Sans',sans-serif;font-size:38px;font-weight:400;color:#fff;letter-spacing:0.67px;-webkit-text-stroke:0.9px #fff;">37°C</div>
<div class="t" style="left:1665.6px;top:843.8px;font-family:'Liberation Sans',sans-serif;font-size:19px;font-weight:700;color:#67768c;letter-spacing:0.30px;">CAPACITY</div>
<div class="t" style="left:1666.6px;top:871.8px;font-family:'Liberation Sans',sans-serif;font-size:38px;font-weight:400;color:#fff;letter-spacing:0.02px;-webkit-text-stroke:0.9px #fff;">465.8 GiB</div>
<div class="t" style="left:1907.8px;top:843.8px;font-family:'Liberation Sans',sans-serif;font-size:19px;font-weight:700;color:#67768c;letter-spacing:-0.06px;">POWERED ON</div>
<div class="t" style="left:1907.8px;top:871.8px;font-family:'Liberation Sans',sans-serif;font-size:38px;font-weight:400;color:#fff;letter-spacing:0.56px;-webkit-text-stroke:0.9px #fff;">220 days</div>
<div class="t" style="left:216.3px;top:1032.0px;font-family:'Liberation Sans',sans-serif;font-size:21px;font-weight:700;color:#97a3b7;letter-spacing:-0.40px;">TEMPERATURE</div>
<div class="t" style="left:216.3px;top:1062.0px;font-family:'Liberation Sans',sans-serif;font-size:19px;font-weight:400;color:#67768c;letter-spacing:0.29px;-webkit-text-stroke:0.3px #67768c;">Temperature history for each device</div>
<div class="t" style="left:2093.2px;top:1048.0px;font-family:'Liberation Sans',sans-serif;font-size:19px;font-weight:400;color:#67768c;letter-spacing:0.30px;-webkit-text-stroke:0.3px #67768c;">forever</div>
</body></html>
